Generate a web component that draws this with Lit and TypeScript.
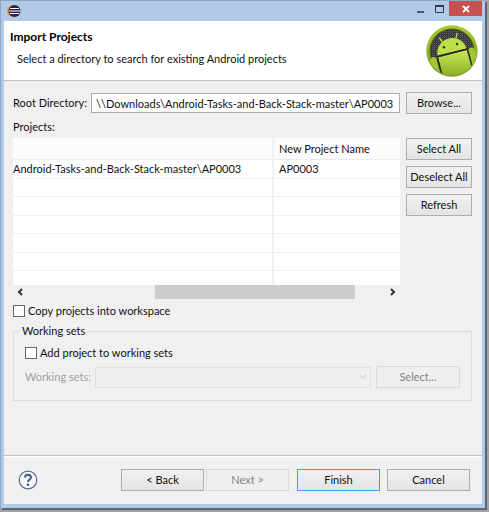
import { LitElement, html, css, svg } from "lit";
import { customElement, state } from "lit/decorators.js";

const eclipseIcon = svg`
  <svg viewBox="0 0 14 14" width="14" height="14" aria-hidden="true">
    <circle cx="6" cy="7" r="6" fill="#f09a3e"/>
    <circle cx="7.500" cy="7" r="6" fill="#2a2350"/>
    <path d="M3 4.500h9M2 7h11.500M3 9.500h9" stroke="#fff" stroke-width="1.200"/>
  </svg>`;

const androidLogo = svg`
  <svg viewBox="0 0 52 52" width="52" height="52" aria-hidden="true">
    <defs>
      <linearGradient id="ring" x1="0" y1="0" x2="0" y2="1">
        <stop offset="0" stop-color="#a4cd2c"/><stop offset="1" stop-color="#7c9a1e"/>
      </linearGradient>
      <linearGradient id="robot" x1="0" y1="0" x2="0" y2="1">
        <stop offset="0" stop-color="#c9e957"/><stop offset="1" stop-color="#8aac22"/>
      </linearGradient>
      <pattern id="mesh" width="2" height="2" patternUnits="userSpaceOnUse">
        <rect width="2" height="2" fill="#3a3a3e"/><rect width="1" height="1" fill="#606064"/>
      </pattern>
      <clipPath id="disc"><circle cx="26" cy="26" r="24.500"/></clipPath>
    </defs>
    <circle cx="26" cy="26" r="25.700" fill="url(#ring)"/>
    <circle cx="26" cy="26" r="22" fill="url(#mesh)" stroke="#4c5c1c"/>
    <g clip-path="url(#disc)">
      <path d="M11.500 30.500C10 22 16 15 23 13.500C31 11.500 38.500 16 40.500 23.500z" fill="#bde04a"/>
      <path d="M16.500 17l-3-4M30 13.500l1-5" stroke="#b4d844" stroke-width="1.400" stroke-linecap="round"/>
      <circle cx="18" cy="22.300" r="1.200" fill="#2d3313"/>
      <circle cx="31" cy="19" r="1.200" fill="#2d3313"/>
      <path d="M4 36C5 31 9 31 10.500 34L15 52H4z" fill="#a3c733"/>
      <path d="M42.500 26C42 22 47 21 49 25L52 42H47z" fill="#a3c733"/>
      <path d="M12 32.500L41 25L46 42L34 52H17z" fill="url(#robot)"/>
      <path d="M11.500 33l4.500 17M41.500 25l4.500 16M11 31.700L41.500 24" fill="none" stroke="#26290f" stroke-width="1.300"/>
    </g>
  </svg>`;

const chevron = (d: string) => svg`
  <svg viewBox="0 0 8 8" width="8" height="8" aria-hidden="true">
    <path d=${d} fill="none" stroke="currentColor" stroke-width="2"/>
  </svg>`;

@customElement("app-root")
export class AppRoot extends LitElement {
  @state() private rows = [
    { location: "Android-Tasks-and-Back-Stack-master\\AP0003", name: "AP0003" },
    ...Array.from({ length: 6 }, () => ({ location: "", name: "" })),
  ];

  static styles = css`
    :host {
      display: block;
      box-sizing: border-box;
      min-height: 100vh;
      padding: 0 4px 4px 0;
      background: #a2a2a5;
      font: 11px/16px Lato, "Open Sans", sans-serif;
      color: #111;
    }
    * { box-sizing: border-box; }
    button, input, select { font: inherit; color: inherit; margin: 0; }
    .window {
      display: flex;
      flex-direction: column;
      min-height: calc(100vh - 4px);
      padding: 0 3px 4px;
      background: #b0cae8;
      border: 1px solid #8ba6c8;
      border-width: 1px 0 0 1px;
      box-shadow: 2px 2px #5f656e;
    }
    .titlebar {
      display: flex;
      align-items: flex-start;
      height: 20px;
      padding-left: 3px;
    }
    .titlebar .app { display: flex; flex: 1; padding-top: 3px; }
    .caption {
      display: flex;
      align-items: center;
      justify-content: center;
      width: 20px;
      height: 15px;
      padding: 0;
      border: 0;
      background: none;
    }
    .caption.close { width: 33px; background: #c75050; }
    .client {
      display: flex;
      flex: 1;
      flex-direction: column;
      background: #f0f0f0;
    }
    header {
      display: flex;
      height: 60px;
      padding: 4px 4px 0 6px;
      background: #fff;
      border-bottom: 1px solid #c0c0c0;
    }
    .heading { flex: 1; padding-top: 4px; white-space: nowrap; }
    h1 { margin: 0; font-size: 12px; line-height: 16px; color: #000; }
    .heading p { margin: 6px 0 0 7px; }
    main { flex: 1; padding: 11px 10px 0 9px; }
    .root, .projects { display: grid; grid-template-columns: 1fr 66px; column-gap: 6px; }
    .root { align-items: center; }
    .field { display: flex; align-items: center; white-space: nowrap; }
    .field label { width: 78px; }
    .field input {
      flex: 1;
      min-width: 0;
      height: 20px;
      padding: 0 4px;
      border: 1px solid #ababab;
      background: #fff;
    }
    .btn {
      height: 22px;
      padding: 0;
      border: 1px solid #adadad;
      background: linear-gradient(#f1f1f1, #e4e4e4);
      white-space: nowrap;
    }
    .btn:disabled { border-color: #dadada; background: #efefef; color: #838383; }
    .btn.primary { border-color: #4a9bf5; }
    .caption-text { margin: 5px 0 3px; }
    .stack { display: flex; flex-direction: column; gap: 6px; }
    .viewer { min-width: 0; }
    .viewport { height: 147px; overflow: hidden; background: #fff; }
    table { width: 100%; table-layout: fixed; border-collapse: separate; border-spacing: 0; }
    th, td {
      height: 19px;
      padding: 0 0 0 5px;
      border-bottom: 1px solid #f0f0f0;
      line-height: 16px;
      font-weight: normal;
      text-align: left;
      white-space: nowrap;
    }
    tbody tr:nth-child(even) td { height: 18px; }
    th { height: 22px; background: #fcfcfc; border-color: #e3edf7; }
    th:first-child, td:first-child { width: 261px; padding-left: 0; border-right: 2px solid #eef3f8; }
    .scrollbar { display: flex; align-items: center; height: 14px; background: #f0f0f0; }
    .scrollbar button {
      display: flex;
      justify-content: center;
      width: 16px;
      padding: 0;
      border: 0;
      background: none;
      color: #333;
    }
    .track { flex: 1; display: grid; grid-template-columns: 126fr 200fr 29fr; height: 14px; }
    .thumb { grid-column: 2; background: #cdcdcd; }
    .check { display: flex; align-items: center; gap: 3px; width: max-content; }
    .check input {
      appearance: none;
      width: 12px;
      height: 12px;
      border: 1px solid #666;
      background: #fff;
    }
    .check input:checked { background: #3a6ea5; }
    .copy { margin-top: 4px; }
    fieldset {
      min-width: 0;
      margin: 4px 0 0;
      padding: 6px 11px 12px;
      border: 1px solid #dcdcdc;
    }
    legend { margin-left: -5px; padding: 0 2px; }
    .sets { display: grid; grid-template-columns: 70px 1fr 84px; align-items: center; margin-top: 5px; white-space: nowrap; }
    .sets label { color: #a0a0a0; }
    .combo { display: grid; align-items: center; margin-right: 5px; }
    .combo select {
      grid-area: 1 / 1;
      appearance: none;
      width: 100%;
      height: 21px;
      padding: 0 20px 0 4px;
      border: 1px solid #d9d9d9;
      border-radius: 0;
      background: #efefef;
    }
    .combo svg { grid-area: 1 / 1; justify-self: end; margin-right: 4px; color: #b0b0b0; pointer-events: none; }
    footer {
      display: flex;
      align-items: center;
      height: 49px;
      padding: 0 12px 0 14px;
      border-top: 1px solid #c4c4c4;
      box-shadow: inset 0 1px #fff;
    }
    footer .btn { width: 83px; }
    .help { display: flex; padding: 0; border: 0; background: none; }
    .nav { display: flex; gap: 2px; margin-left: auto; }
    .actions { display: flex; gap: 7px; margin-left: 8px; }
  `;

  render() {
    return html`
      <div class="window">
        <div class="titlebar">
          <span class="app">${eclipseIcon}</span>
          <button class="caption" aria-label="Minimize">
            <svg viewBox="0 0 10 10" width="10" height="10"><path d="M3 8h7" stroke="#4d5a68" stroke-width="2"/></svg>
          </button>
          <button class="caption" aria-label="Maximize">
            <svg viewBox="0 0 10 8" width="10" height="8"><path d="M1.500 1v6.500h8V1z" fill="none" stroke="#303a45"/><path d="M1 1h9" stroke="#303a45" stroke-width="2"/></svg>
          </button>
          <button class="caption close" aria-label="Close">
            <svg viewBox="0 0 8 8" width="8" height="8"><path d="M1 1l6 6M7 1L1 7" stroke="#fff" stroke-width="1.800"/></svg>
          </button>
        </div>
        <div class="client">
          <header>
            <div class="heading">
              <h1>Import Projects</h1>
              <p>Select a directory to search for existing Android projects</p>
            </div>
            ${androidLogo}
          </header>
          <main>
            <div class="root">
              <div class="field">
                <label for="root">Root Directory:</label>
                <input id="root" type="text" .value=${"\\\\Downloads\\Android-Tasks-and-Back-Stack-master\\AP0003"}>
              </div>
              <button class="btn">Browse...</button>
            </div>
            <div class="caption-text" id="projects-label">Projects:</div>
            <div class="projects">
              <div class="viewer">
                <div class="viewport">
                  <table aria-labelledby="projects-label">
                    <thead><tr><th></th><th>New Project Name</th></tr></thead>
                    <tbody>
                      ${this.rows.map((r) => html`<tr><td>${r.location}</td><td>${r.name}</td></tr>`)}
                    </tbody>
                  </table>
                </div>
                <div class="scrollbar">
                  <button aria-label="Scroll left">${chevron("M5 1L2 4l3 3")}</button>
                  <div class="track"><div class="thumb"></div></div>
                  <button aria-label="Scroll right">${chevron("M3 1l3 3-3 3")}</button>
                </div>
              </div>
              <div class="stack">
                <button class="btn">Select All</button>
                <button class="btn">Deselect All</button>
                <button class="btn">Refresh</button>
              </div>
            </div>
            <label class="check copy"><input type="checkbox">Copy projects into workspace</label>
            <fieldset>
              <legend>Working sets</legend>
              <label class="check"><input type="checkbox">Add project to working sets</label>
              <div class="sets">
                <label for="sets">Working sets:</label>
                <div class="combo">
                  <select id="sets" disabled></select>
                  ${chevron("M1 2l3 3 3-3")}
                </div>
                <button class="btn" disabled>Select...</button>
              </div>
            </fieldset>
          </main>
          <footer>
            <button class="help" aria-label="Help">
              <svg viewBox="0 0 20 20" width="20" height="20">
                <circle cx="10" cy="10" r="8.800" fill="#f6f8fb" stroke="#5c6f92" stroke-width="1.200"/>
                <path d="M7 7.500C7 3.800 13 3.900 13 7.300C13 9.600 10 9.400 10 12" fill="none" stroke="#43587f" stroke-width="2"/>
                <circle cx="10" cy="14.700" r="1.300" fill="#43587f"/>
              </svg>
            </button>
            <div class="nav">
              <button class="btn">&lt; Back</button>
              <button class="btn" disabled>Next &gt;</button>
            </div>
            <div class="actions">
              <button class="btn primary">Finish</button>
              <button class="btn">Cancel</button>
            </div>
          </footer>
        </div>
      </div>
    `;
  }
}
